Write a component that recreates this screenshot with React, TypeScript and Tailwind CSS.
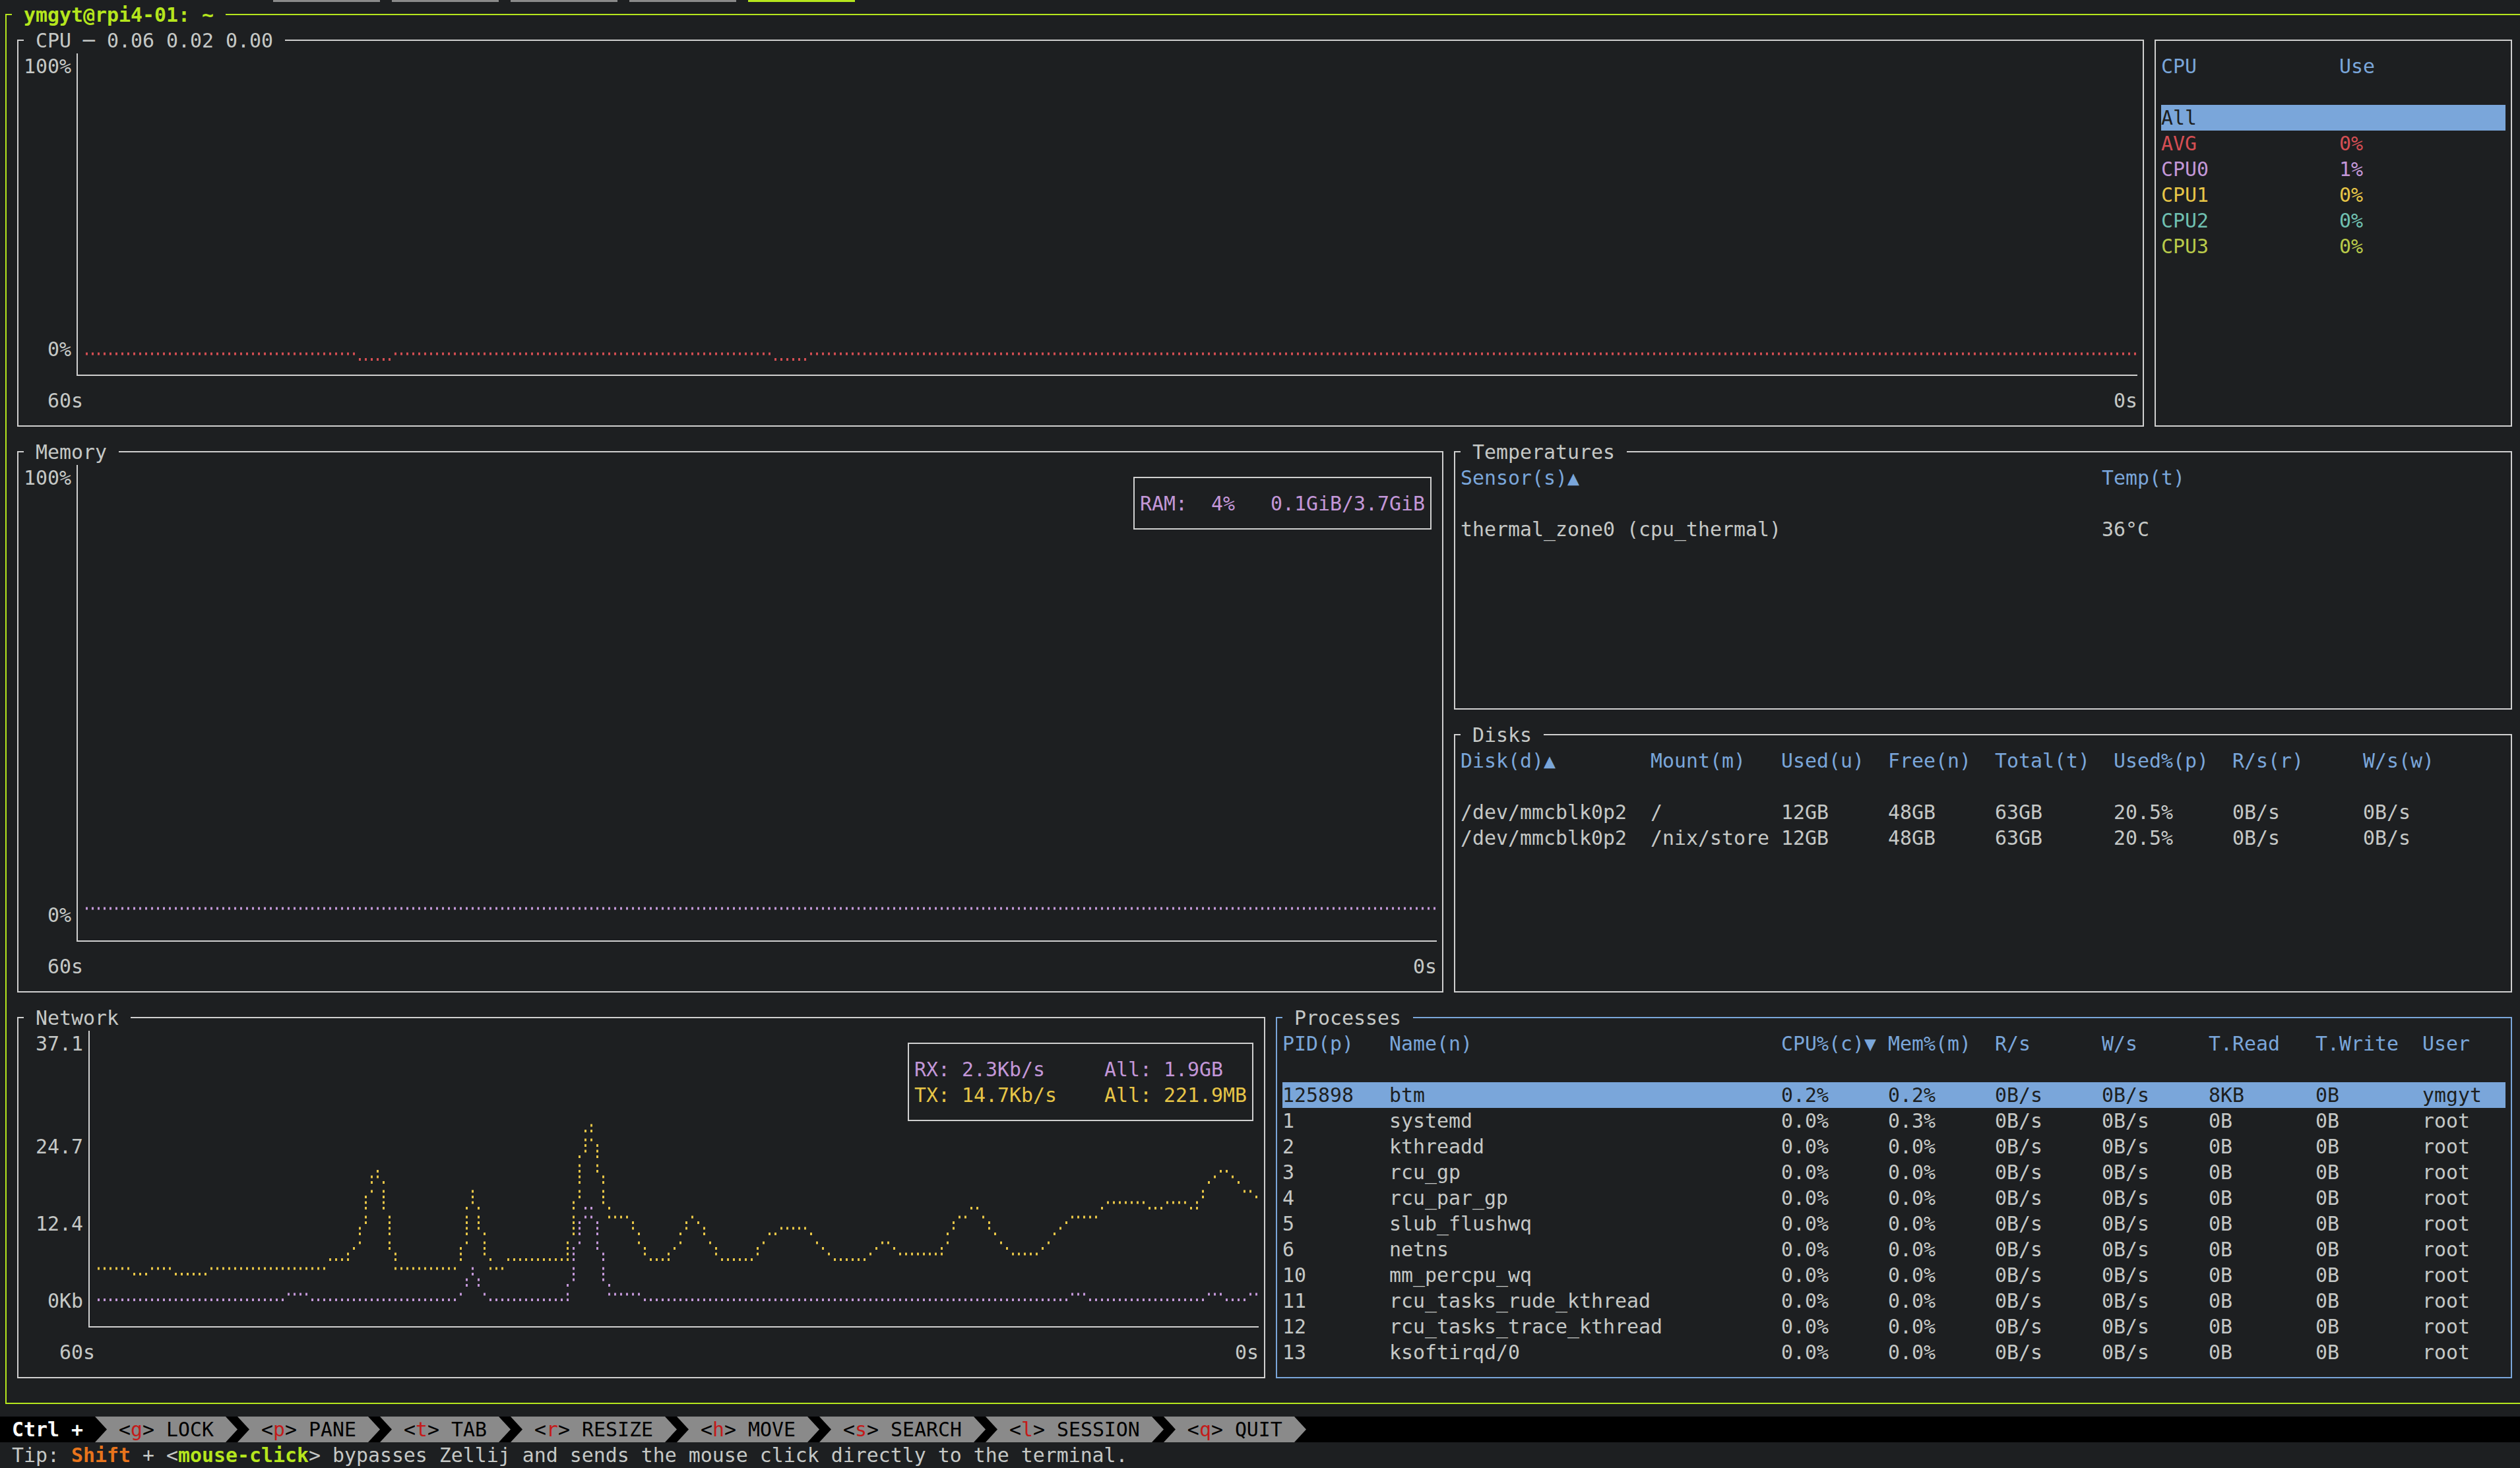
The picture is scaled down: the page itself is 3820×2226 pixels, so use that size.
import type { ReactNode } from "react";

type Pt = [number, number];

const TONE = {
  grey: "border-[#d0d0d0]",
  blue: "border-[#7aa6da]",
  lime: "border-[#b5e61d]",
};

// one terminal cell is 18px wide and 39px tall
function Box({
  tone = "grey",
  title,
  className = "",
  children,
}: {
  tone?: keyof typeof TONE;
  title?: ReactNode;
  className?: string;
  children?: ReactNode;
}) {
  const b = TONE[tone];
  return (
    <div className={`flex flex-col ${className}`}>
      <div className="flex h-[39px] shrink-0">
        <div className={`ml-[8px] mt-[18px] w-[10px] border-l-2 border-t-2 ${b}`} />
        {title}
        <div className={`mr-[8px] mt-[18px] flex-1 border-r-2 border-t-2 ${b}`} />
      </div>
      <div
        className={`mx-[8px] mb-[19px] flex min-h-0 flex-1 flex-col border-x-2 border-b-2 px-[8px] pb-[18px] ${b}`}
      >
        {children}
      </div>
    </div>
  );
}

function Title({ children }: { children: string }) {
  return <span className="whitespace-pre">{children}</span>;
}

// braille dot helpers: 2 dot columns and 4 dot rows per cell
function dotY(dr: number) {
  return Math.floor(dr / 4) * 39 + 9.5 + 8.5 * (dr % 4);
}

function yToDr(y: number) {
  const row = Math.floor(y / 39);
  const k = Math.max(0, Math.min(3, Math.round((y - row * 39 - 9.5) / 8.5)));
  return row * 4 + k;
}

function lineDots(values: number[]): Pt[] {
  const out: Pt[] = [];
  values.forEach((dr, i) => {
    out.push([i, dr]);
    const next = values[i + 1];
    if (next === undefined) return;
    const d = next - dr;
    if (Math.abs(d) <= 1) return;
    const step = Math.sign(d);
    const mid = dr + Math.trunc(d / 2);
    for (let r = dr + step; r !== mid + step; r += step) out.push([i, r]);
    for (let r = mid + step; r !== next; r += step) out.push([i + 1, r]);
  });
  return out;
}

function sample(poly: Pt[], x0: number, y0: number, n: number) {
  return Array.from({ length: n }, (_, dc) => {
    const x = x0 + dc * 9 + 5.5;
    let y = x <= poly[0][0] ? poly[0][1] : poly[poly.length - 1][1];
    for (let i = 0; i < poly.length - 1; i++) {
      const [ax, ay] = poly[i];
      const [bx, by] = poly[i + 1];
      if (x >= ax && x <= bx) {
        y = bx === ax ? by : ay + ((by - ay) * (x - ax)) / (bx - ax);
        break;
      }
    }
    return yToDr(y - y0);
  });
}

function Plot({ w, h, series }: { w: number; h: number; series: { color: string; pts: Pt[] }[] }) {
  return (
    <svg width={w} height={h} className="block">
      {series.map((s, i) => (
        <path
          key={i}
          fill={s.color}
          d={s.pts.map(([c, r]) => `M${c * 9 + 4} ${(dotY(r) - 2).toFixed(1)}h3v4h-3z`).join("")}
        />
      ))}
    </svg>
  );
}

function labelRows(n: number, map: Record<number, string>) {
  return Array.from({ length: n }, (_, i) => map[i] ?? "");
}

function Chart({
  labels,
  labelW,
  xPad,
  plotW,
  plotH,
  series,
  legend,
}: {
  labels: string[];
  labelW: string;
  xPad: string;
  plotW: number;
  plotH: number;
  series: { color: string; pts: Pt[] }[];
  legend?: ReactNode;
}) {
  return (
    <div className="flex flex-col">
      <div className="flex">
        <div className={`${labelW} shrink-0 text-right`}>
          {labels.map((l, i) => (
            <div key={i} className="h-[39px]">
              {l}
            </div>
          ))}
        </div>
        <div className="mb-[18px] ml-[8px] flex-1 border-b-2 border-l-2 border-[#d0d0d0] pl-[8px]">
          <div className="relative">
            <Plot w={plotW} h={plotH} series={series} />
            {legend}
          </div>
        </div>
      </div>
      <div className={`flex h-[39px] justify-between ${xPad}`}>
        <span>60s</span>
        <span>0s</span>
      </div>
    </div>
  );
}

const cpuValues = Array.from({ length: 346 }, (_, dc) =>
  (dc >= 46 && dc <= 51) || (dc >= 116 && dc <= 121) ? 47 : 46,
);

const memValues = Array.from({ length: 228 }, () => 68);

const TX: Pt[] = [
  [147, 1924], [198, 1924], [202, 1932], [223, 1932], [230, 1924], [261, 1924], [265, 1932], [313, 1932],
  [319, 1924], [491, 1924], [497, 1909], [530, 1909], [545, 1880], [560, 1800], [572, 1773], [582, 1805],
  [592, 1880], [600, 1924], [695, 1924], [705, 1880], [716, 1807], [728, 1860], [740, 1909], [746, 1924],
  [765, 1924], [769, 1909], [860, 1909], [870, 1850], [885, 1730], [896, 1705], [905, 1740], [915, 1810],
  [925, 1846], [954, 1846], [970, 1880], [985, 1909], [1017, 1909], [1035, 1870], [1052, 1844], [1070, 1870],
  [1090, 1905], [1103, 1909], [1142, 1909], [1165, 1875], [1193, 1862], [1222, 1862], [1245, 1890],
  [1263, 1909], [1314, 1909], [1333, 1885], [1352, 1885], [1358, 1901], [1429, 1901], [1454, 1846],
  [1474, 1827], [1492, 1846], [1515, 1880], [1537, 1901], [1575, 1901], [1600, 1870], [1626, 1846],
  [1658, 1846], [1665, 1832], [1684, 1823], [1735, 1823], [1741, 1832], [1760, 1832], [1767, 1823],
  [1798, 1823], [1809, 1832], [1818, 1832], [1830, 1800], [1851, 1773], [1870, 1785], [1890, 1805],
  [1904, 1815],
];

const RX: Pt[] = [
  [147, 1971], [427, 1971], [436, 1963], [466, 1963], [472, 1971], [689, 1971], [695, 1963], [708, 1945],
  [718, 1924], [728, 1945], [740, 1963], [746, 1971], [861, 1971], [868, 1930], [876, 1870], [885, 1835],
  [895, 1830], [905, 1860], [915, 1920], [921, 1963], [970, 1963], [976, 1971], [1620, 1971], [1624, 1963],
  [1645, 1963], [1652, 1971], [1824, 1971], [1830, 1963], [1852, 1963], [1860, 1971], [1888, 1971],
  [1897, 1963], [1907, 1963],
];

function CpuLegend() {
  const rows: [string, string, string][] = [
    ["AVG", "0%", "text-[#d54e53]"],
    ["CPU0", "1%", "text-[#c397d8]"],
    ["CPU1", "0%", "text-[#e7c547]"],
    ["CPU2", "0%", "text-[#70c0b1]"],
    ["CPU3", "0%", "text-[#b9ca4a]"],
  ];
  return (
    <div className="flex flex-col">
      <div className="flex h-[39px] text-[#7aa6da]">
        <span className="w-[270px]">CPU</span>
        <span>Use</span>
      </div>
      <div className="h-[39px]" />
      <div className="h-[39px] bg-[#7aa6da] text-[#1d1f21]">All</div>
      {rows.map(([name, use, color]) => (
        <div key={name} className={`flex h-[39px] ${color}`}>
          <span className="w-[270px]">{name}</span>
          <span>{use}</span>
        </div>
      ))}
    </div>
  );
}

function Temperatures() {
  return (
    <div className="flex flex-col">
      <div className="flex h-[39px] text-[#7aa6da]">
        <span className="w-[972px]">Sensor(s)▲</span>
        <span>Temp(t)</span>
      </div>
      <div className="h-[39px]" />
      <div className="flex h-[39px]">
        <span className="w-[972px]">thermal_zone0 (cpu_thermal)</span>
        <span>36°C</span>
      </div>
    </div>
  );
}

const diskW = ["w-[288px]", "w-[198px]", "w-[162px]", "w-[162px]", "w-[180px]", "w-[180px]", "w-[198px]", "flex-1"];

function Disks() {
  const head = ["Disk(d)▲", "Mount(m)", "Used(u)", "Free(n)", "Total(t)", "Used%(p)", "R/s(r)", "W/s(w)"];
  const data = [
    ["/dev/mmcblk0p2", "/", "12GB", "48GB", "63GB", "20.5%", "0B/s", "0B/s"],
    ["/dev/mmcblk0p2", "/nix/store", "12GB", "48GB", "63GB", "20.5%", "0B/s", "0B/s"],
  ];
  return (
    <div className="flex flex-col">
      <div className="flex h-[39px] text-[#7aa6da]">
        {head.map((h, i) => (
          <span key={h} className={`${diskW[i]} whitespace-pre`}>
            {h}
          </span>
        ))}
      </div>
      <div className="h-[39px]" />
      {data.map((r, j) => (
        <div key={j} className="flex h-[39px]">
          {r.map((c, i) => (
            <span key={i} className={`${diskW[i]} whitespace-pre`}>
              {c}
            </span>
          ))}
        </div>
      ))}
    </div>
  );
}

const procW = [
  "w-[162px]", "w-[594px]", "w-[162px]", "w-[162px]", "w-[162px]", "w-[162px]", "w-[162px]", "w-[162px]", "flex-1",
];

function Processes() {
  const head = ["PID(p)", "Name(n)", "CPU%(c)▼", "Mem%(m)", "R/s", "W/s", "T.Read", "T.Write", "User"];
  const procs: [string, string][] = [
    ["1", "systemd"],
    ["2", "kthreadd"],
    ["3", "rcu_gp"],
    ["4", "rcu_par_gp"],
    ["5", "slub_flushwq"],
    ["6", "netns"],
    ["10", "mm_percpu_wq"],
    ["11", "rcu_tasks_rude_kthread"],
    ["12", "rcu_tasks_trace_kthread"],
    ["13", "ksoftirqd/0"],
  ];
  const data = [
    ["125898", "btm", "0.2%", "0.2%", "0B/s", "0B/s", "8KB", "0B", "ymgyt"],
    ...procs.map(([pid, name]) => [pid, name, "0.0%", name === "systemd" ? "0.3%" : "0.0%", "0B/s", "0B/s", "0B", "0B", "root"]),
  ];
  return (
    <div className="flex flex-col">
      <div className="flex h-[39px] text-[#7aa6da]">
        {head.map((h, i) => (
          <span key={h} className={procW[i]}>
            {h}
          </span>
        ))}
      </div>
      <div className="h-[39px]" />
      {data.map((r, j) => (
        <div key={j} className={`flex h-[39px] ${j === 0 ? "bg-[#7aa6da] text-[#1d1f21]" : ""}`}>
          {r.map((c, i) => (
            <span key={i} className={`${procW[i]} whitespace-pre`}>
              {c}
            </span>
          ))}
        </div>
      ))}
    </div>
  );
}

function Btm() {
  return (
    <div className="flex flex-1 flex-col">
      <div className="flex h-[624px]">
        <Box className="w-[3240px]" title={<Title>{" CPU ─ 0.06 0.02 0.00 "}</Title>}>
          <Chart
            labels={labelRows(13, { 0: "100%", 11: "0%" })}
            labelW="w-[72px]"
            xPad="pl-[36px]"
            plotW={3114}
            plotH={468}
            series={[{ color: "#d54e53", pts: lineDots(cpuValues) }]}
          />
        </Box>
        <Box className="flex-1">
          <CpuLegend />
        </Box>
      </div>
      <div className="flex h-[858px]">
        <Box className="w-[2178px]" title={<Title>{" Memory "}</Title>}>
          <Chart
            labels={labelRows(19, { 0: "100%", 17: "0%" })}
            labelW="w-[72px]"
            xPad="pl-[36px]"
            plotW={2052}
            plotH={702}
            series={[{ color: "#c397d8", pts: lineDots(memValues) }]}
            legend={
              <Box className="absolute right-0 top-0 h-[117px] w-[468px] bg-[#1d1f21]">
                <div className="h-[39px] whitespace-pre text-[#c397d8]">RAM:  4%   0.1GiB/3.7GiB</div>
              </Box>
            }
          />
        </Box>
        <div className="flex flex-1 flex-col">
          <Box className="h-[429px]" title={<Title>{" Temperatures "}</Title>}>
            <Temperatures />
          </Box>
          <Box className="flex-1" title={<Title>{" Disks "}</Title>}>
            <Disks />
          </Box>
        </div>
      </div>
      <div className="flex flex-1">
        <Box className="w-[1908px]" title={<Title>{" Network "}</Title>}>
          <Chart
            labels={labelRows(12, { 0: "37.1", 4: "24.7", 7: "12.4", 10: "0Kb" })}
            labelW="w-[90px]"
            xPad="pl-[54px]"
            plotW={1764}
            plotH={429}
            series={[
              { color: "#e7c547", pts: lineDots(sample(TX, 144, 1563, 196)) },
              { color: "#c397d8", pts: lineDots(sample(RX, 144, 1563, 196)) },
            ]}
            legend={
              <Box className="absolute right-0 top-0 h-[156px] w-[540px] bg-[#1d1f21]">
                <div className="flex h-[39px] whitespace-pre text-[#c397d8]">
                  <span className="w-[288px]">RX: 2.3Kb/s</span>
                  <span>All: 1.9GB</span>
                </div>
                <div className="flex h-[39px] whitespace-pre text-[#e7c547]">
                  <span className="w-[288px]">TX: 14.7Kb/s</span>
                  <span>All: 221.9MB</span>
                </div>
              </Box>
            }
          />
        </Box>
        <Box className="flex-1" tone="blue" title={<Title>{" Processes "}</Title>}>
          <Processes />
        </Box>
      </div>
    </div>
  );
}

const KEYS: [string, string][] = [
  ["g", "LOCK"],
  ["p", "PANE"],
  ["t", "TAB"],
  ["r", "RESIZE"],
  ["h", "MOVE"],
  ["s", "SEARCH"],
  ["l", "SESSION"],
  ["q", "QUIT"],
];

function StatusBar() {
  return (
    <div className="flex h-[39px] bg-black">
      <span className="whitespace-pre font-bold text-white"> Ctrl + </span>
      {KEYS.map(([k, label]) => (
        <div key={k} className="flex">
          <svg width="18" height="39" className="block shrink-0">
            <rect width="18" height="39" fill="#8a8a8a" />
            <path d="M0 0L18 19.5L0 39Z" fill="#000" />
          </svg>
          <span className="whitespace-pre bg-[#8a8a8a] text-black">
            {" <"}
            <span className="text-[#c41a1a]">{k}</span>
            {"> "}
            {label}{" "}
          </span>
          <svg width="18" height="39" className="block shrink-0">
            <path d="M0 0L18 19.5L0 39Z" fill="#8a8a8a" />
          </svg>
        </div>
      ))}
    </div>
  );
}

export default function App() {
  return (
    <div className="h-[2226px] w-[3820px] overflow-hidden bg-[#1d1f21] font-['DejaVu_Sans_Mono',monospace] text-[29.9px] leading-[39px] text-[#c5c8c6]">
      <div className="flex h-[3px] gap-[18px] pl-[414px]">
        <div className="w-[162px] bg-[#8a8a8a]" />
        <div className="w-[162px] bg-[#8a8a8a]" />
        <div className="w-[162px] bg-[#8a8a8a]" />
        <div className="w-[162px] bg-[#8a8a8a]" />
        <div className="w-[162px] bg-[#b5e61d]" />
      </div>
      <Box
        tone="lime"
        className="h-[2145px] w-[3834px]"
        title={<span className="whitespace-pre font-bold text-[#b5e61d]"> ymgyt@rpi4-01: ~ </span>}
      >
        <Btm />
      </Box>
      <StatusBar />
      <div className="h-[39px] whitespace-pre">
        {" Tip: "}
        <span className="font-bold text-[#e8741c]">Shift</span>
        {" + <"}
        <span className="font-bold text-[#b5e61d]">mouse-click</span>
        {"> bypasses Zellij and sends the mouse click directly to the terminal."}
      </div>
    </div>
  );
}
